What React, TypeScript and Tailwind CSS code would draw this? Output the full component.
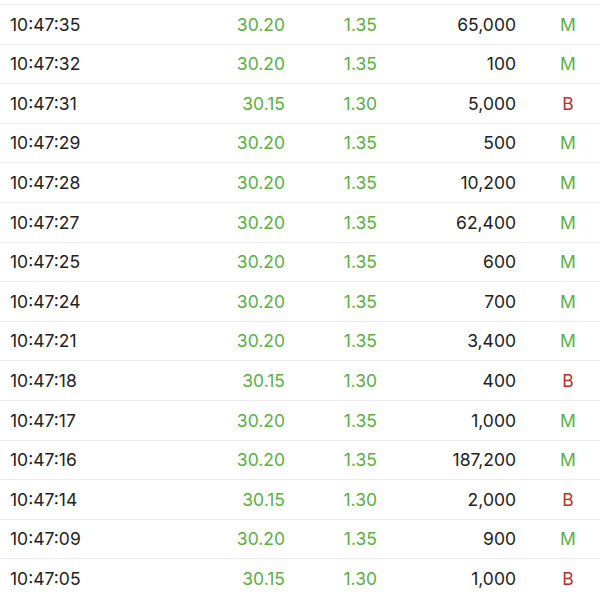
import React from 'react';

const trades: [string, string, string, string, 'M' | 'B'][] = [
  ['10:47:35', '30.20', '1.35', '65,000', 'M'],
  ['10:47:32', '30.20', '1.35', '100', 'M'],
  ['10:47:31', '30.15', '1.30', '5,000', 'B'],
  ['10:47:29', '30.20', '1.35', '500', 'M'],
  ['10:47:28', '30.20', '1.35', '10,200', 'M'],
  ['10:47:27', '30.20', '1.35', '62,400', 'M'],
  ['10:47:25', '30.20', '1.35', '600', 'M'],
  ['10:47:24', '30.20', '1.35', '700', 'M'],
  ['10:47:21', '30.20', '1.35', '3,400', 'M'],
  ['10:47:18', '30.15', '1.30', '400', 'B'],
  ['10:47:17', '30.20', '1.35', '1,000', 'M'],
  ['10:47:16', '30.20', '1.35', '187,200', 'M'],
  ['10:47:14', '30.15', '1.30', '2,000', 'B'],
  ['10:47:09', '30.20', '1.35', '900', 'M'],
  ['10:47:05', '30.15', '1.30', '1,000', 'B'],
];

function App() {
  return (
    <div className="w-[600px] h-[600px] bg-white overflow-hidden pt-[4px] font-['Inter',sans-serif] text-[17.5px]">
      {trades.map(([time, price, change, vol, side]) => (
        <div
          key={time}
          className="flex items-center h-[39.6px] border-t border-[#ececec] text-[#222] pt-[1px]"
        >
          <span className="w-[200px] shrink-0 pl-[10px]">{time}</span>
          <span className="w-[85px] shrink-0 text-right text-[#5cae45]">{price}</span>
          <span className="w-[92px] shrink-0 text-right text-[#5cae45]">{change}</span>
          <span className="w-[139px] shrink-0 text-right">{vol}</span>
          <span
            className={
              'w-[84px] shrink-0 pl-[20px] text-center ' +
              (side === 'M' ? 'text-[#5cae45]' : 'text-[#b3302d]')
            }
          >
            {side}
          </span>
        </div>
      ))}
    </div>
  );
}

export default App;
